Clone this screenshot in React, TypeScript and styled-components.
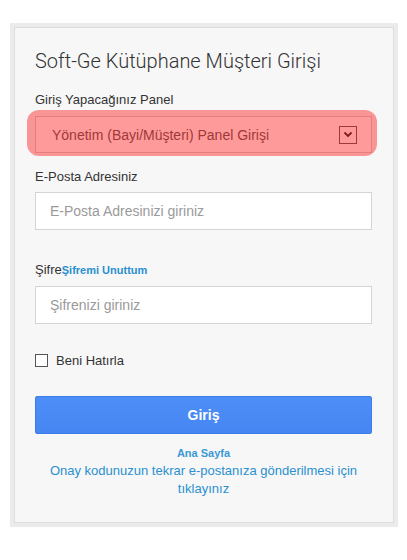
import React, { useState } from 'react';
import styled, { createGlobalStyle } from 'styled-components';

const GlobalStyle = createGlobalStyle`
  body {
    margin: 0;
    background: #fff;
    font-family: 'Liberation Sans', Arial, sans-serif;
    color: #333;
  }
`;

const Chevron: React.FC = () => (
  <svg width="10" height="7" viewBox="0 0 10 7">
    <path d="M1.5 1.5 L5 5 L8.5 1.5" fill="none" stroke="#222" strokeWidth="1.8" />
  </svg>
);

const App: React.FC = () => {
  const [remember, setRemember] = useState(false);

  return (
    <>
      <GlobalStyle />
      <Frame>
        <Panel>
          <Title>Soft-Ge Kütüphane Müşteri Girişi</Title>

          <Field $gap={9}>
            <Label>Giriş Yapacağınız Panel</Label>
            <Highlight>
              <Select>
                <span>Yönetim (Bayi/Müşteri) Panel Girişi</span>
                <ArrowBox>
                  <Chevron />
                </ArrowBox>
              </Select>
            </Highlight>
          </Field>

          <Field $gap={8} $top={16}>
            <Label>E-Posta Adresiniz</Label>
            <Input placeholder="E-Posta Adresinizi giriniz" />
          </Field>

          <Field $gap={8} $top={32}>
            <Label>
              Şifre<ForgotLink href="#">Şifremi Unuttum</ForgotLink>
            </Label>
            <Input type="password" placeholder="Şifrenizi giriniz" />
          </Field>

          <RememberRow>
            <Checkbox type="checkbox" checked={remember} onChange={() => setRemember(!remember)} />
            <span>Beni Hatırla</span>
          </RememberRow>

          <SubmitButton type="button">Giriş</SubmitButton>

          <Links>
            <SmallLink href="#">Ana Sayfa</SmallLink>
            <BigLink href="#">Onay kodunuzun tekrar e-postanıza gönderilmesi için tıklayınız</BigLink>
          </Links>
        </Panel>
      </Frame>
    </>
  );
};

export default App;

const Frame = styled.div`
  margin: 23px 0 0 10px;
  width: 388px;
  padding: 4px;
  box-sizing: border-box;
  background: #ebebeb;
`;

const Panel = styled.div`
  display: flex;
  flex-direction: column;
  border: 1px solid #dcdcdc;
  background: #f7f7f7;
  padding: 19px 21px 24px 20px;
`;

const Title = styled.h1`
  margin: 0 0 17px;
  font-family: Roboto, 'Liberation Sans', sans-serif;
  font-weight: 300;
  font-size: 20px;
  line-height: 28px;
  color: #333;
`;

const Field = styled.div<{ $gap: number; $top?: number }>`
  display: flex;
  flex-direction: column;
  gap: ${(p) => p.$gap}px;
  margin-top: ${(p) => p.$top ?? 0}px;
`;

const Label = styled.label`
  font-size: 13px;
  line-height: 15px;
  color: #333;
`;

const ForgotLink = styled.a`
  font-size: 11px;
  font-weight: bold;
  color: #2a8fcf;
  text-decoration: none;
`;

const Highlight = styled.div`
  position: relative;
  &::after {
    content: '';
    position: absolute;
    inset: -6px -5px -3px -8px;
    background: rgba(255, 20, 20, 0.43);
    border-radius: 12px;
    pointer-events: none;
  }
`;

const Select = styled.div`
  display: flex;
  align-items: center;
  justify-content: space-between;
  height: 37px;
  box-sizing: border-box;
  padding: 0 14px 0 16px;
  border: 1px solid #cfcfcf;
  background: #fff;
  font-size: 14px;
  color: #555;
`;

const ArrowBox = styled.span`
  display: flex;
  align-items: center;
  justify-content: center;
  width: 18px;
  height: 18px;
  box-sizing: border-box;
  border: 1px solid #555;
`;

const Input = styled.input`
  height: 38px;
  box-sizing: border-box;
  border: 1px solid #d4d4d4;
  background: #fff;
  padding: 0 14px;
  font-family: 'Liberation Sans', Arial, sans-serif;
  font-size: 14px;
  color: #333;
  outline: none;
  &::placeholder {
    color: #9a9a9a;
  }
`;

const RememberRow = styled.label`
  display: flex;
  align-items: center;
  gap: 8px;
  margin-top: 29px;
  font-size: 13px;
  color: #333;
`;

const Checkbox = styled.input`
  appearance: none;
  margin: 0;
  width: 13px;
  height: 13px;
  border: 1px solid #555;
  background: #fff;
  box-sizing: border-box;
`;

const SubmitButton = styled.button`
  margin-top: 28px;
  height: 38px;
  border: 1px solid #3a7ee8;
  border-radius: 2px;
  background: linear-gradient(#4d8ef8, #4686f2);
  color: #fff;
  font-family: 'Liberation Sans', Arial, sans-serif;
  font-weight: bold;
  font-size: 14px;
`;

const Links = styled.div`
  display: flex;
  flex-direction: column;
  align-items: center;
  text-align: center;
  margin-top: 13px;
  gap: 3px;
`;

const SmallLink = styled.a`
  font-size: 11px;
  font-weight: bold;
  color: #3a9ad6;
  text-decoration: none;
`;

const BigLink = styled.a`
  font-size: 13px;
  line-height: 18px;
  color: #2a90d0;
  text-decoration: none;
  padding: 0 12px;
`;
